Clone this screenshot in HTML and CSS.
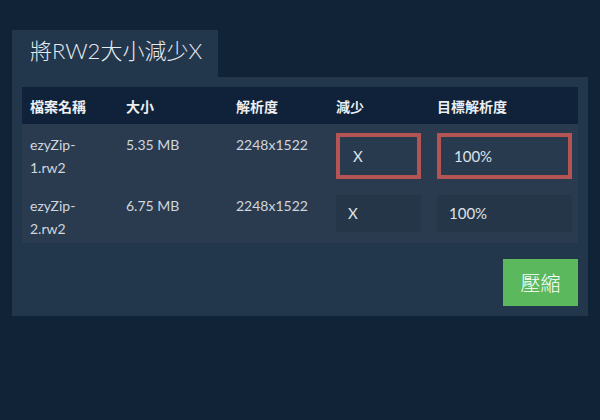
FILE: index.html
```html
<!DOCTYPE html>
<html lang="zh-Hant">
<head>
<meta charset="utf-8">
<link rel="stylesheet" href="styles.css">
</head>
<body>
<div class="wrap">
  <div class="tab">將RW2大小減少X</div>
  <div class="panel">
    <div class="table">
      <div class="row head">
        <div class="cell">檔案名稱</div>
        <div class="cell">大小</div>
        <div class="cell">解析度</div>
        <div class="cell">減少</div>
        <div class="cell">目標解析度</div>
      </div>
      <div class="row r1">
        <div class="cell">ezyZip-<br>1.rw2</div>
        <div class="cell">5.35 MB</div>
        <div class="cell">2248x1522</div>
        <div class="cell"><div class="field small err">X</div></div>
        <div class="cell"><div class="field wide err">100%</div></div>
      </div>
      <div class="row r2">
        <div class="cell">ezyZip-<br>2.rw2</div>
        <div class="cell">6.75 MB</div>
        <div class="cell">2248x1522</div>
        <div class="cell"><div class="field small">X</div></div>
        <div class="cell"><div class="field wide">100%</div></div>
      </div>
    </div>
    <div class="actions">
      <button class="btn">壓縮</button>
    </div>
  </div>
</div>
</body>
</html>
```
FILE: styles.css
```css
html, body {
  margin: 0;
  padding: 0;
  background: #112337;
  width: 600px;
  height: 420px;
  overflow: hidden;
}
body {
  font-family: Lato, "Noto Sans CJK TC", sans-serif;
}
.wrap {
  padding: 30px 12px 0 12px;
}
.tab {
  display: inline-block;
  width: 206px;
  height: 47px;
  box-sizing: border-box;
  padding: 7px 0 0 18px;
  background: #22364c;
  color: #e6ebf0;
  font-family: Lato, "Noto Sans CJK TC", sans-serif;
  font-weight: 300;
  font-size: 22px;
  line-height: 28px;
  vertical-align: top;
}
.panel {
  background: #22364c;
  padding: 10px;
  width: 576px;
  box-sizing: border-box;
}
.table {
  display: flex;
  flex-direction: column;
}
.row {
  display: grid;
  grid-template-columns: 96px 110px 100px 101px 149px;
  background: #2b3b4f;
}
.row.head {
  background: #10223a;
  height: 37px;
  align-items: center;
}
.head .cell {
  font-family: "Noto Sans CJK TC", sans-serif;
  font-weight: 700;
  font-size: 14px;
  color: #eceff2;
  line-height: 20px;
}
.cell {
  padding-left: 8px;
  font-size: 14px;
  line-height: 23px;
  color: #cfd6de;
}
.r1 {
  height: 61px;
}
.r1 .cell {
  padding-top: 9px;
}
.r2 {
  height: 58px;
}
.r2 .cell {
  padding-top: 9px;
}
.field {
  box-sizing: border-box;
  background: #283a4e;
  color: #dde3ea;
  font-size: 15px;
  padding-left: 12px;
  display: flex;
  align-items: center;
}
.r1 .field {
  margin-top: 0;
  height: 46px;
}
.r2 .field {
  margin-top: 1px;
  height: 37px;
  background: #263649;
}
.field.small {
  width: 85px;
}
.field.wide {
  width: 135px;
}
.field.err {
  border: 4px solid #b55553;
  padding-left: 13px;
}
.actions {
  display: flex;
  justify-content: flex-end;
  margin-top: 16px;
}
.btn {
  width: 75px;
  height: 47px;
  border: none;
  background: #5cb85c;
  color: #ffffff;
  font-family: "Noto Sans CJK TC", sans-serif;
  font-weight: 300;
  font-size: 20px;
  padding: 0;
  cursor: pointer;
}
```
